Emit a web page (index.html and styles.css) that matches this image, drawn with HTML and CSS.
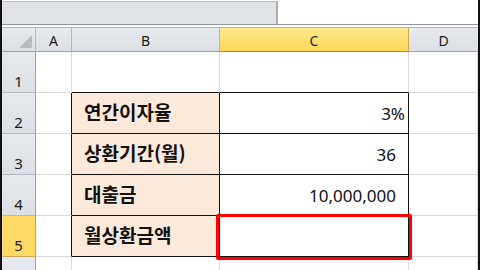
FILE: index.html
```html
<!DOCTYPE html>
<html lang="ko">
<head>
<meta charset="utf-8">
<link rel="stylesheet" href="styles.css">
</head>
<body>
<div class="frame">
  <div class="topbar">
    <div class="namebox"></div>
    <div class="formula"></div>
  </div>
  <div class="sep"></div>
  <div class="sheet">
    <div class="hdr corner"><span class="tri"></span></div>
    <div class="hdr col">A</div>
    <div class="hdr col">B</div>
    <div class="hdr col sel">C</div>
    <div class="hdr col last">D</div>

    <div class="hdr row">1</div>
    <div class="cell abtop"></div>
    <div class="cell tb-top"></div>
    <div class="cell tb-top"></div>
    <div class="cell"></div>

    <div class="hdr row">2</div>
    <div class="cell aleft"></div>
    <div class="cell lab">연간이자율</div>
    <div class="cell val pct">3%</div>
    <div class="cell"></div>

    <div class="hdr row">3</div>
    <div class="cell aleft"></div>
    <div class="cell lab">상환기간(월)</div>
    <div class="cell val">36</div>
    <div class="cell"></div>

    <div class="hdr row">4</div>
    <div class="cell aleft"></div>
    <div class="cell lab">대출금</div>
    <div class="cell val">10,000,000</div>
    <div class="cell"></div>

    <div class="hdr row selrow">5</div>
    <div class="cell aleft"></div>
    <div class="cell lab">월상환금액</div>
    <div class="cell val"></div>
    <div class="cell"></div>

    <div class="hdr row">6</div>
    <div class="cell"></div>
    <div class="cell"></div>
    <div class="cell"></div>
    <div class="cell"></div>
  </div>
  <div class="redbox"></div>
</div>
</body>
</html>
```

FILE: styles.css
```css
html, body {
  margin: 0;
  padding: 0;
  background: #ffffff;
  width: 480px;
  height: 270px;
  overflow: hidden;
}

.frame {
  position: relative;
  width: 476px;
  height: 270px;
  border-left: 2px solid #111;
  border-right: 2px solid #111;
  overflow: hidden;
  font-family: "Noto Sans", "Noto Sans CJK KR", sans-serif;
}

.topbar {
  height: 24px;
  display: flex;
  align-items: flex-start;
}

.namebox {
  margin-top: 1px;
  width: 276px;
  height: 23px;
  background: #dfe3e8;
  border-top: 1px solid #b9bec4;
  border-right: 2px solid #a9aeb4;
  box-sizing: border-box;
}

.formula {
  flex: 1;
  height: 24px;
  background: #fff;
}

.sep {
  height: 2px;
  border-top: 1px solid #8e949a;
  border-bottom: 1px solid #b4b9be;
}

.sheet {
  display: grid;
  grid-template-columns: 34px 36px 148px 189px 69px;
  grid-template-rows: 24px 41px 41px 41px 41px 41px 41px;
}

.hdr {
  box-sizing: border-box;
  background: linear-gradient(#e6e9ed, #dcdfe4);
  border-right: 1px solid #b3b8be;
  border-bottom: 1px solid #9da2a8;
  color: #1a1a1a;
  font-size: 14px;
  display: flex;
  justify-content: center;
  align-items: center;
}

.col {
  padding-top: 1px;
}

.col.last {
  border-right: none;
}

.col.sel {
  background: linear-gradient(#ffe98c, #ffd75a);
  border-bottom: 1px solid #b5892a;
  border-right: 1px solid #c9a65a;
}

.corner {
  position: relative;
}

.tri {
  position: absolute;
  right: 3px;
  bottom: 3px;
  width: 0;
  height: 0;
  border-left: 13px solid transparent;
  border-bottom: 13px solid #b6bbc1;
}

.row {
  align-items: flex-end;
  padding-bottom: 1px;
  font-size: 15px;
  border-bottom: 1px solid #b3b8be;
  border-right: 1px solid #9da2a8;
}

.row.selrow {
  background: #ffd966;
  border-bottom: 1px solid #c9a65a;
}

.cell {
  box-sizing: border-box;
  border-right: 1px solid #d9d9d9;
  border-bottom: 1px solid #d9d9d9;
  background: #fff;
}

.cell.aleft {
  border-right: 1px solid #111;
}

.cell.tb-top {
  border-bottom: 1px solid #111;
}

.cell.lab {
  background: #fce9da;
  border-right: 1px solid #111;
  border-bottom: 1px solid #111;
  font-family: "Noto Sans CJK KR", sans-serif;
  font-weight: 700;
  font-size: 19px;
  color: #111;
  display: flex;
  align-items: center;
  padding-left: 12px;
  padding-bottom: 4px;
}

.cell.val {
  border-right: 1px solid #111;
  border-bottom: 1px solid #111;
  font-size: 17px;
  color: #111;
  display: flex;
  align-items: center;
  justify-content: flex-end;
  padding-right: 12px;
  padding-top: 1px;
}

.cell.val.pct {
  padding-right: 3px;
}

.redbox {
  position: absolute;
  left: 214px;
  top: 214px;
  width: 190px;
  height: 40px;
  border: 3px solid #ff0000;
  border-radius: 2px;
}
```
